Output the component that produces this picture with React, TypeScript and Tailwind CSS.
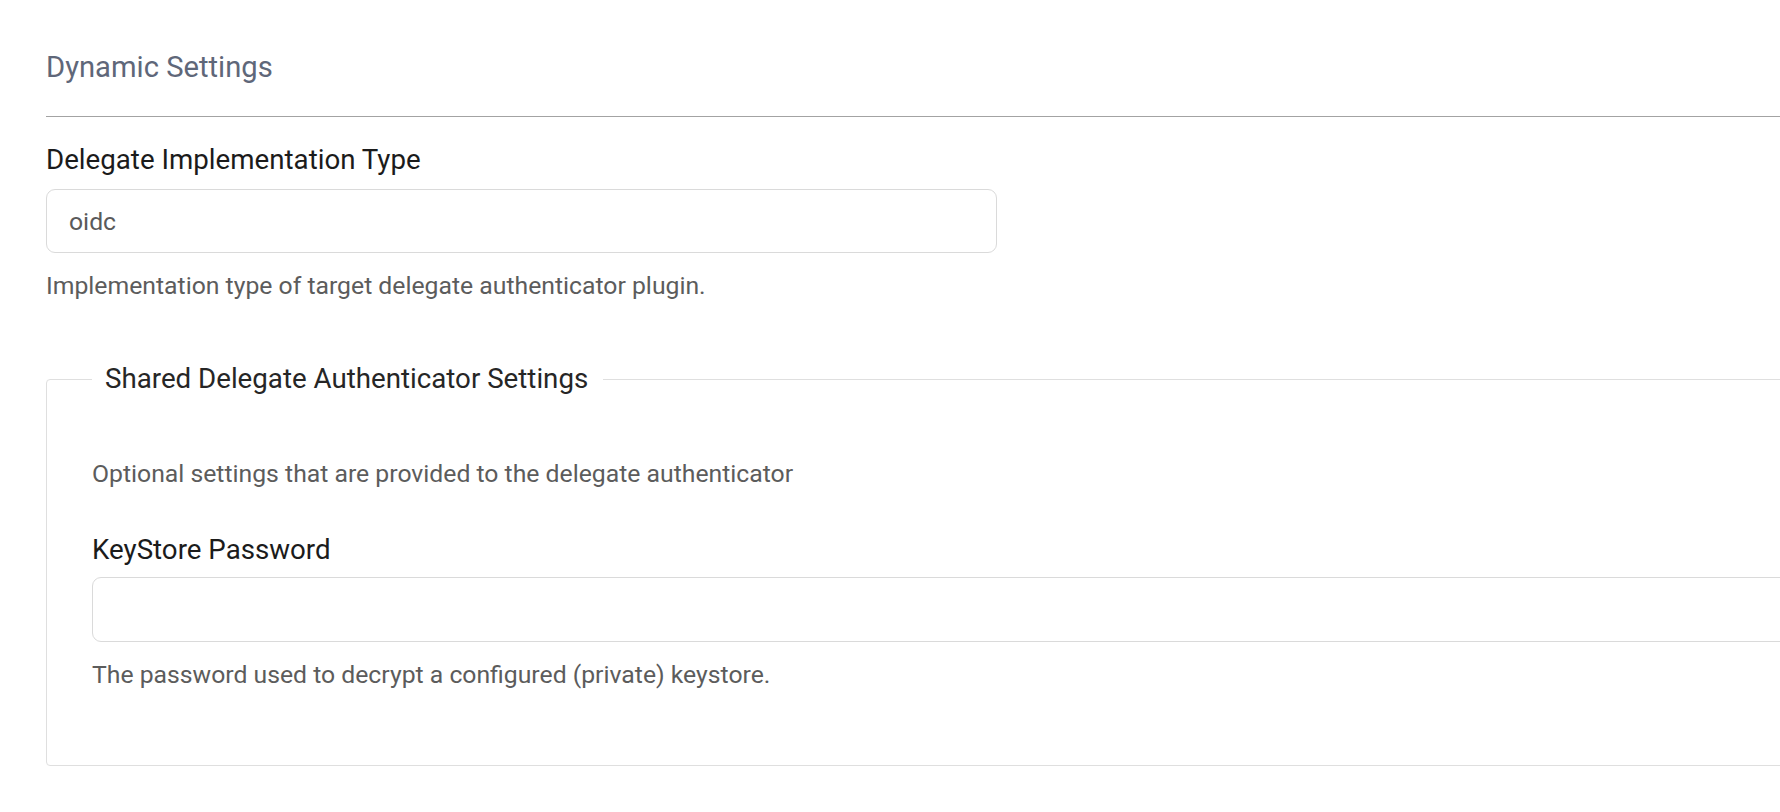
import { useState } from "react";

export default function App() {
  const [implType, setImplType] = useState("oidc");
  const [keystorePassword, setKeystorePassword] = useState("");

  return (
    <div className="h-[812px] w-full overflow-hidden bg-white font-['Roboto',sans-serif]">
      <div className="w-[1840px] pl-[46px]">
        {/* Section header */}
        <h2 className="pt-[49px] text-[29.2px] leading-[36px] font-normal text-[#5f6779]">
          Dynamic Settings
        </h2>
        <hr className="mt-[31px] border-0 border-t border-[#a3a3a3]" />

        {/* Delegate implementation type */}
        <div className="mt-[26px]">
          <label className="block text-[27.7px] leading-[34px] text-[#1b1b1b]">
            Delegate Implementation Type
          </label>
          <input
            value={implType}
            onChange={(e) => setImplType(e.target.value)}
            className="mt-[12px] block h-[64px] w-[951px] rounded-[9px] border border-[#dadada] bg-white px-[22px] text-[24.75px] text-[#5a5a5a] outline-none"
          />
          <p className="mt-[18px] text-[24.75px] leading-[30px] text-[#5c5c5c]">
            Implementation type of target delegate authenticator plugin.
          </p>
        </div>

        {/* Shared settings group */}
        <fieldset className="mt-[61px] rounded-[4px] border border-[#dfdfdf] pl-[45px] pr-[45px] pb-[75px]">
          <legend className="pl-[13px] pr-[15px] text-[27.7px] leading-[34px] text-[#262626]">
            Shared Delegate Authenticator Settings
          </legend>
          <p className="mt-[63px] text-[24.75px] leading-[30px] text-[#5c5c5c]">
            Optional settings that are provided to the delegate authenticator
          </p>

          <div className="mt-[44px]">
            <label className="block text-[27.7px] leading-[34px] text-[#1b1b1b]">
              KeyStore Password
            </label>
            <input
              type="password"
              value={keystorePassword}
              onChange={(e) => setKeystorePassword(e.target.value)}
              className="mt-[10px] block h-[65px] w-full rounded-[9px] border border-[#dadada] bg-white px-[22px] text-[24.75px] text-[#5a5a5a] outline-none"
            />
            <p className="mt-[18px] text-[24.75px] leading-[30px] text-[#5c5c5c]">
              The password used to decrypt a configured (private) keystore.
            </p>
          </div>
        </fieldset>
      </div>
    </div>
  );
}
